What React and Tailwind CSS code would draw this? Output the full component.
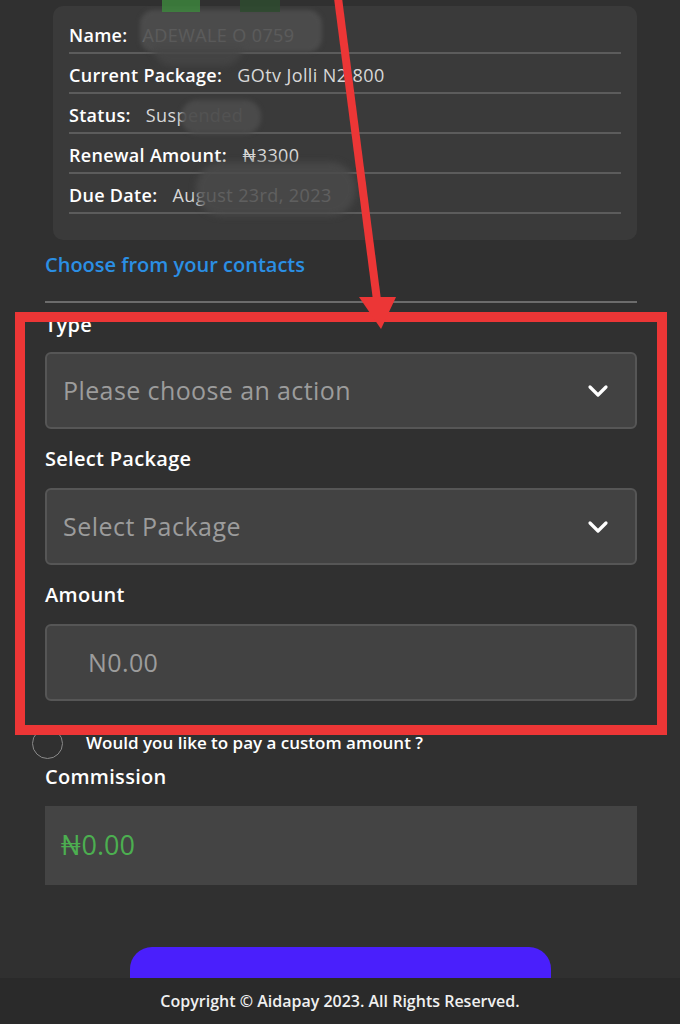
import React from "react";

function Chevron() {
  return (
    <svg width="22" height="14" viewBox="0 0 22 14" className="shrink-0">
      <polyline points="3,3 11,11 19,3" fill="none" stroke="#ffffff" strokeWidth="3.2" strokeLinecap="round" strokeLinejoin="round" />
    </svg>
  );
}

function Row({ label, value }) {
  return (
    <div className="flex items-center h-[40px] pt-[4px] border-b-2 border-[#5c5c5c] gap-[15px]">
      <span className="text-[18px] font-semibold tracking-[0.3px] text-white">{label}</span>
      <span className="text-[18px] tracking-[0.4px] text-[#d8d8d8]">{value}</span>
    </div>
  );
}

export default function App() {
  return (
    <div className="relative w-[680px] h-[1024px] overflow-hidden bg-[#303030]" style={{ fontFamily: "'Open Sans', Lato, sans-serif" }}>
      <div className="px-[45px] pr-[43px] pt-[6px]">
        {/* info card */}
        <div className="relative ml-[8px] rounded-[10px] bg-[#3a3a3a] px-[16px] pt-[8px] pb-[26px]">
          <Row label="Name:" value="ADEWALE  O 0759" />
          <Row label="Current Package:" value="GOtv Jolli N2,800" />
          <Row label="Status:" value="Suspended" />
          <Row label="Renewal Amount:" value="₦3300" />
          <Row label="Due Date:" value="August 23rd, 2023" />
          {/* redaction smears */}
          <div className="absolute left-[87px] top-[4px] w-[182px] h-[42px] rounded-[14px] bg-[#4e4e4e]/90 blur-[2px]" />
          <div className="absolute left-[100px] top-[40px] w-[90px] h-[20px] rounded-b-[20px] bg-[#464646]/80 blur-[3px]" />
          <div className="absolute left-[128px] top-[94px] w-[80px] h-[34px] rounded-[16px] bg-[#4b4b4b]/95 blur-[2px]" />
          <div className="absolute left-[143px] top-[156px] w-[160px] h-[54px] rounded-[26px] bg-[#4a4a4a]/85 blur-[3px]" />
        </div>

        <div className="mt-[11px] text-[20px] font-semibold leading-[28px] text-[#2b8fe4]">Choose from your contacts</div>
        <div className="mt-[22px] h-[2px] bg-[#6c6c6c]" />

        <div className="mt-[8px] text-[20px] font-semibold leading-[28px] tracking-[0.3px] text-white">Type</div>
        <div className="mt-[13px] flex h-[77px] items-center justify-between rounded-[6px] border-2 border-[#565656] bg-[#424242] pl-[16px] pr-[26px]">
          <span className="text-[25px] tracking-[0.4px] text-[#9c9c9c]">Please choose an action</span>
          <Chevron />
        </div>

        <div className="mt-[16px] text-[20px] font-semibold leading-[28px] tracking-[0.3px] text-white">Select Package</div>
        <div className="mt-[15px] flex h-[77px] items-center justify-between rounded-[6px] border-2 border-[#565656] bg-[#424242] pl-[16px] pr-[26px]">
          <span className="text-[25px] tracking-[0.5px] text-[#9c9c9c]">Select Package</span>
          <Chevron />
        </div>

        <div className="mt-[16px] text-[20px] font-semibold leading-[28px] tracking-[0.3px] text-white">Amount</div>
        <div className="mt-[15px] flex h-[77px] items-center rounded-[6px] border-2 border-[#565656] bg-[#424242] pl-[41px]">
          <span className="text-[25px] tracking-[0.4px] text-[#9c9c9c]">N0.00</span>
        </div>

        <div className="mt-[27px] flex h-[30px] items-center gap-[23px]">
          <div className="ml-[-13px] h-[31px] w-[31px] shrink-0 rounded-full border-[1.5px] border-[#8a8a8a]" />
          <span className="text-[17px] font-semibold text-white">Would you like to pay a custom amount ?</span>
        </div>

        <div className="mt-[5px] text-[20px] font-semibold leading-[28px] tracking-[0.3px] text-white">Commission</div>
        <div className="mt-[15px] flex h-[79px] items-center bg-[#444444] pl-[15px]">
          <span className="text-[27px] text-[#4caf50]">₦0.00</span>
        </div>

        <div className="mt-[62px] h-[40px] w-[421px] rounded-t-[22px] bg-[#4a1ffc]" style={{ marginLeft: 85 }} />
      </div>

      <div className="absolute bottom-0 left-0 right-0 flex h-[46px] items-center justify-center bg-[#2a2a2a]">
        <span className="text-[16px] font-semibold text-[#f0f0f0]">Copyright © Aidapay 2023. All Rights Reserved.</span>
      </div>

      {/* top green fragments */}
      <div className="absolute left-[162px] top-0 h-[12px] w-[38px] bg-[#3d8a3d]/80" />
      <div className="absolute left-[240px] top-0 h-[12px] w-[40px] bg-[#2f4a30]/90" />

      {/* annotation overlay */}
      <svg className="pointer-events-none absolute inset-0" width="680" height="1024" viewBox="0 0 680 1024">
        <rect x="20" y="317" width="642" height="413" fill="none" stroke="#ec3636" strokeWidth="10" />
        <line x1="338" y1="-2" x2="377" y2="300" stroke="#ec3636" strokeWidth="8" />
        <polygon points="359,297 396,297 381,329" fill="#ec3636" />
      </svg>
    </div>
  );
}
